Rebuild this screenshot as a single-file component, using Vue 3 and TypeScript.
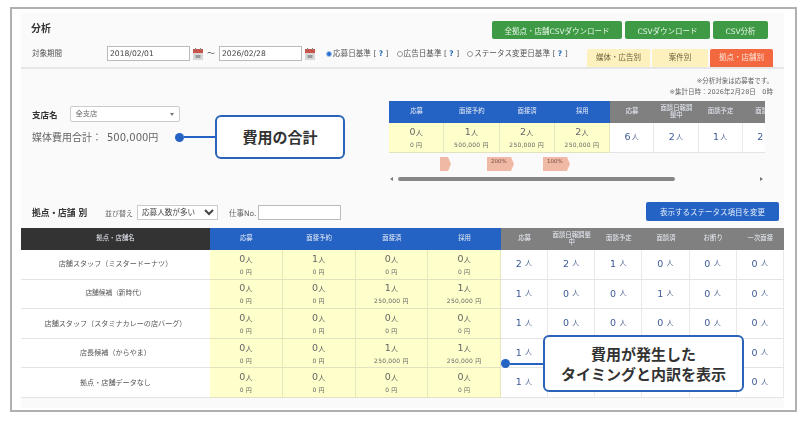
<script setup lang="ts">
interface Money { n: number; yen: string }
interface Row { name: string; small?: boolean; money: Money[]; counts: number[] }
const z: Money = { n: 0, yen: '0' }
const one: Money = { n: 1, yen: '250,000' }
const rows: Row[] = [
  { name: '店舗スタッフ（ミスタードーナツ）', money: [z, { n: 1, yen: '0' }, z, z], counts: [2, 2, 1, 0, 0, 0] },
  { name: '店舗候補（新時代）', small: true, money: [z, z, one, one], counts: [1, 0, 0, 1, 0, 0] },
  { name: '店舗スタッフ（スタミナカレーの店バーグ）', money: [z, z, z, z], counts: [1, 0, 0, 0, 0, 0] },
  { name: '店長候補（からやま）', money: [z, z, one, one], counts: [1, 0, 0, 0, 0, 0] },
  { name: '拠点・店舗データなし', money: [z, z, z, z], counts: [1, 0, 0, 0, 0, 0] },
]
const blueHeads = ['応募', '面接予約', '面接済', '採用']
const grayHeads = ['応募', '面談日報調整中', '面談予定', '面談済', 'お断り', '一次面接']
const summaryMoney: Money[] = [z, { n: 1, yen: '500,000' }, { n: 2, yen: '250,000' }, { n: 2, yen: '250,000' }]
const summaryCounts = [6, 2, 1, 2]
const summaryGray = ['応募', '面談日報調整中', '面談予定', '面談済']
const radios = [
  { label: '応募日基準', on: true },
  { label: '広告日基準', on: false },
  { label: 'ステータス変更日基準', on: false },
]
</script>

<template>
  <div class="frame">
    <div class="inner">
      <header class="head">
        <div class="head-top">
          <h1 class="title">分析</h1>
          <div class="btns">
            <button class="gbtn w130">全拠点・店舗CSVダウンロード</button>
            <button class="gbtn w85">CSVダウンロード</button>
            <button class="gbtn w55">CSV分析</button>
          </div>
        </div>
        <div class="head-filter">
          <span class="period">対象期間</span>
          <input class="date" value="2018/02/01" />
          <svg class="cal" viewBox="0 0 10 12" width="10" height="12">
            <rect x="0" y="1" width="10" height="11" fill="#d8d8d8" />
            <rect x="0" y="1" width="10" height="4" fill="#c9544a" />
            <rect x="2" y="0" width="1" height="2" fill="#888" />
            <rect x="7" y="0" width="1" height="2" fill="#888" />
            <rect x="2.5" y="7" width="5" height="3" fill="#999" />
          </svg>
          <span class="tilde">～</span>
          <input class="date" value="2026/02/28" />
          <svg class="cal" viewBox="0 0 10 12" width="10" height="12">
            <rect x="0" y="1" width="10" height="11" fill="#d8d8d8" />
            <rect x="0" y="1" width="10" height="4" fill="#c9544a" />
            <rect x="2" y="0" width="1" height="2" fill="#888" />
            <rect x="7" y="0" width="1" height="2" fill="#888" />
            <rect x="2.5" y="7" width="5" height="3" fill="#999" />
          </svg>
          <div class="radios">
            <span v-for="r in radios" :key="r.label" class="radio">
              <i class="dot" :class="{ on: r.on }"></i>{{ r.label }} [ <b>?</b> ]
            </span>
          </div>
          <div class="tabs">
            <span class="tab">媒体・広告別</span>
            <span class="tab t56">案件別</span>
            <span class="tab active">拠点・店舗別</span>
          </div>
        </div>
      </header>

      <section class="mid">
        <div class="notes">
          <p>※分析対象は応募者です。</p>
          <p>※集計日時：2026年2月28日　0時</p>
        </div>
        <div class="mid-row">
          <div class="branch">
            <div class="branch-line">
              <strong>支店名</strong>
              <span class="fake-select">全支店<i class="caret"></i></span>
            </div>
            <div class="total"><span class="total-label">媒体費用合計：</span>500,000円</div>
          </div>
          <div class="summary">
            <div class="sum-grid">
              <div v-for="h in blueHeads" :key="h" class="sh blue">{{ h }}</div>
              <div v-for="h in summaryGray" :key="'g' + h" class="sh gray">{{ h }}</div>
              <div v-for="(m, i) in summaryMoney" :key="'m' + i" class="yc">
                <span class="yn">{{ m.n }}<small>人</small></span>
                <span class="yy">{{ m.yen }} 円</span>
              </div>
              <div v-for="(c, i) in summaryCounts" :key="'c' + i" class="wc">{{ c }}<small>人</small></div>
            </div>
            <div class="chevs">
              <span class="chev c1"></span>
              <span class="chev c2">200%</span>
              <span class="chev c3">100%</span>
            </div>
            <div class="scroll">
              <span class="arrow left"></span>
              <span class="thumb"></span>
              <span class="arrow right"></span>
            </div>
          </div>
        </div>
      </section>

      <section class="list">
        <div class="list-bar">
          <strong class="list-title">拠点・店舗 別</strong>
          <label class="sort">並び替え
            <select class="sort-sel"><option>応募人数が多い</option></select>
          </label>
          <label class="job">仕事No.<input class="job-in" /></label>
          <button class="status-btn">表示するステータス項目を変更</button>
        </div>
        <div class="big">
          <div class="bh dark">拠点・店舗名</div>
          <div v-for="h in blueHeads" :key="h" class="bh blue">{{ h }}</div>
          <div v-for="h in grayHeads" :key="'g' + h" class="bh gray">{{ h }}</div>
          <template v-for="r in rows" :key="r.name">
            <div class="name" :class="{ small: r.small }">{{ r.name }}</div>
            <div v-for="(m, i) in r.money" :key="i" class="yc">
              <span class="yn">{{ m.n }}<small>人</small></span>
              <span class="yy">{{ m.yen }} 円</span>
            </div>
            <div v-for="(c, i) in r.counts" :key="'c' + i" class="wc spaced">{{ c }} <small>人</small></div>
          </template>
        </div>
      </section>
    </div>

    <div class="call call-a">
      <i class="pin"></i><i class="wire"></i>
      <div class="bubble">費用の合計</div>
    </div>
    <div class="call call-b">
      <i class="pin"></i><i class="wire"></i>
      <div class="bubble">費用が発生した<br />タイミングと内訳を表示</div>
    </div>
  </div>
</template>

<style>
html, body { background: #fff; }
</style>

<style scoped>
* { box-sizing: border-box; }
.frame {
  position: relative;
  width: 787px;
  height: 405px;
  margin: 7px 0 0 10px;
  padding: 4px 11px 2px 9px;
  border: 2px solid #b0b0b0;
  background: #fff;
  font-family: "DejaVu Sans", "Noto Sans CJK JP", sans-serif;
  font-size: 8px;
  color: #555;
}
.inner { height: 100%; background: #fafafa; filter: blur(0.35px); }
.head { height: 56px; border-bottom: 2px solid #e6e6e6; }
.head-top { height: 33px; display: flex; justify-content: space-between; padding: 9px 16px 0 10px; }
.head-top .btns { margin-top: -1px; }
.title { margin: 0; font-size: 10px; font-weight: 700; color: #333; line-height: 14px; }
.btns { display: flex; gap: 3px; }
.gbtn {
  height: 18px; padding: 0; border: 0; border-radius: 2px;
  background: #3f9a45; color: #e8f5e8; font: inherit; font-size: 7.5px; white-space: nowrap;
}
.w130 { width: 130px; }
.w85 { width: 85px; }
.w55 { width: 55px; }
.head-filter { display: flex; align-items: flex-start; height: 21px; padding-left: 11px; }
.period { width: 75px; line-height: 15px; font-size: 7.5px; }
.date {
  width: 83px; height: 15px; padding: 0 2px; border: 1px solid #bbb; background: #fff;
  font: inherit; font-size: 7.6px; color: #444; outline: 0;
}
.cal { margin: 2px 0 0 3px; }
.tilde { width: 16px; text-align: center; line-height: 15px; }
.radios { display: flex; gap: 8px; margin-left: 11px; line-height: 15px; font-size: 7.6px; white-space: nowrap; }
.radio b { color: #2a6db5; }
.dot {
  display: inline-block; width: 6px; height: 6px; margin-right: 1px; border: 1px solid #999;
  border-radius: 50%; background: #fff; vertical-align: -0.5px;
}
.dot.on { background: #2a6fd0; border-color: #a9c7ee; }
.tabs { display: flex; gap: 2px; margin: 3px 11px 0 auto; }
.tab {
  width: 63px; height: 18px; border-radius: 2px 2px 0 0; background: #fdf1bd; color: #6b5f3a;
  font-size: 7.5px; line-height: 18px; text-align: center; white-space: nowrap;
}
.t56 { width: 56px; }
.active { background: #f4683f; color: #fde3da; }

.mid { height: 136px; }
.notes { padding: 7px 11px 0 0; text-align: right; font-size: 6.5px; color: #666; line-height: 11px; }
.notes p { margin: 0; }
.mid-row { display: flex; margin-top: 3px; }
.branch { width: 368px; padding: 5px 0 0 11px; }
.branch-line { display: flex; align-items: center; gap: 12px; height: 16px; }
.branch-line strong { font-size: 8.5px; color: #333; }
.fake-select {
  position: relative; width: 110px; height: 16px; padding-left: 5px; border: 1px solid #ccc;
  border-radius: 2px; background: #fff; font-size: 7.3px; line-height: 14px; color: #666;
}
.caret {
  position: absolute; top: 6px; right: 5px; border: 2px solid transparent; border-top: 3px solid #777; border-bottom: 0;
}
.total { display: flex; margin-top: 9px; font-size: 10px; line-height: 14px; color: #666; white-space: nowrap; }
.total-label { width: 75px; }
.summary { width: 376px; overflow: hidden; }
.sum-grid {
  display: grid; width: 398px;
  grid-template-columns: repeat(4, 55.25px) repeat(4, 44.25px);
  grid-template-rows: 22px 30px;
  line-height: 1.1;
}
.sh, .bh { display: flex; align-items: center; justify-content: center; padding: 0 4px; color: #e9eef7; font-size: 6.4px; text-align: center; }
.blue { background: #2462c4; }
.gray { background: #808080; }
.dark { background: #333; }
.yc {
  display: flex; flex-direction: column; align-items: center; justify-content: center; gap: 2px;
  background: #ffffcc; border-right: 1px solid #e6e6bf; border-bottom: 1px solid #e2e2c0; color: #666;
}
.yn { font-size: 9.5px; line-height: 11px; }
.yn small { font-size: 7px; }
.yy { font-size: 6px; line-height: 8px; letter-spacing: .2px; }
.wc {
  display: flex; align-items: center; justify-content: center; gap: 1px;
  background: #fff; border-right: 1px solid #eaeaea; border-bottom: 1px solid #e4e4e4;
  color: #3b5a94; font-size: 9.5px;
}
.wc small { font-size: 7px; color: #5a6f99; }
.spaced { gap: 3px; letter-spacing: .3px; }
.chevs { display: flex; height: 14px; margin-top: 4px; padding-left: 51px; }
.chev {
  height: 14px; background: #f0b9a6; color: #7a4c40; font-size: 5.5px; line-height: 8px; padding-left: 4px;
  clip-path: polygon(0 0, calc(100% - 3px) 0, 100% 50%, calc(100% - 3px) 100%, 0 100%);
}
.c1 { width: 11px; }
.c2 { width: 27px; margin-left: 36px; }
.c3 { width: 27px; margin-left: 29px; }
.scroll { display: flex; align-items: center; height: 6px; margin-top: 5px; }
.arrow { width: 0; height: 0; border: 2.5px solid transparent; }
.left { margin-left: 1px; border-right: 3px solid #777; border-left: 0; }
.thumb { width: 277px; height: 4.5px; margin-left: 5px; border-radius: 3px; background: #868686; }
.right { margin-left: 85px; border-left: 3px solid #777; border-right: 0; }

.list-bar { position: relative; display: flex; align-items: center; height: 15px; padding-left: 11px; }
.list-title { width: 68px; font-size: 8.7px; color: #333; white-space: nowrap; }
.sort, .job { display: flex; align-items: center; font-size: 7px; color: #666; white-space: nowrap; }
.sort { gap: 4px; margin-left: 5px; }
.sort-sel {
  width: 81px; height: 15px; padding: 0; border: 1px solid #ccc; background: #fff;
  font: inherit; font-size: 7.6px; color: #444;
}
.job { margin-left: 11px; font-size: 7.5px; }
.job-in { width: 83px; height: 15px; margin-left: 2px; border: 1px solid #bbb; background: #fff; outline: 0; }
.status-btn {
  position: absolute; top: -3px; right: 5px; width: 133px; height: 19px; padding: 0; border: 0; border-radius: 2px;
  background: #2462c4; color: #e3ebfa; font: inherit; font-size: 7.5px;
}
.big {
  display: grid; margin-top: 8px;
  grid-template-columns: 189px repeat(4, 72.75px) repeat(6, 47.17px);
  grid-template-rows: 22px repeat(5, 29.6px);
  line-height: 1.1;
}
.name {
  display: flex; align-items: center; justify-content: center; background: #fff;
  border-bottom: 1px solid #e4e4e4; font-size: 7.1px; color: #555; white-space: nowrap;
}
.name.small { font-size: 6.7px; }

.call { position: absolute; display: flex; align-items: center; }
.call-a { left: 163px; top: 106px; height: 44px; }
.call-b { left: 489px; top: 326px; height: 57px; }
.pin { width: 9px; height: 9px; border-radius: 50%; background: #2462c4; flex: none; }
.wire { width: 31px; height: 2px; background: #2462c4; flex: none; }
.call-b .wire { width: 33px; }
.bubble {
  display: flex; align-items: center; justify-content: center; text-align: center;
  height: 100%; border: 2px solid #2a63b8; border-radius: 6px; background: #fff;
  color: #333; font-family: "Noto Sans CJK JP", sans-serif; font-size: 15px; font-weight: 700; line-height: 20px;
}
.call-a .bubble { width: 130px; }
.call-b .bubble { width: 201px; }
</style>
